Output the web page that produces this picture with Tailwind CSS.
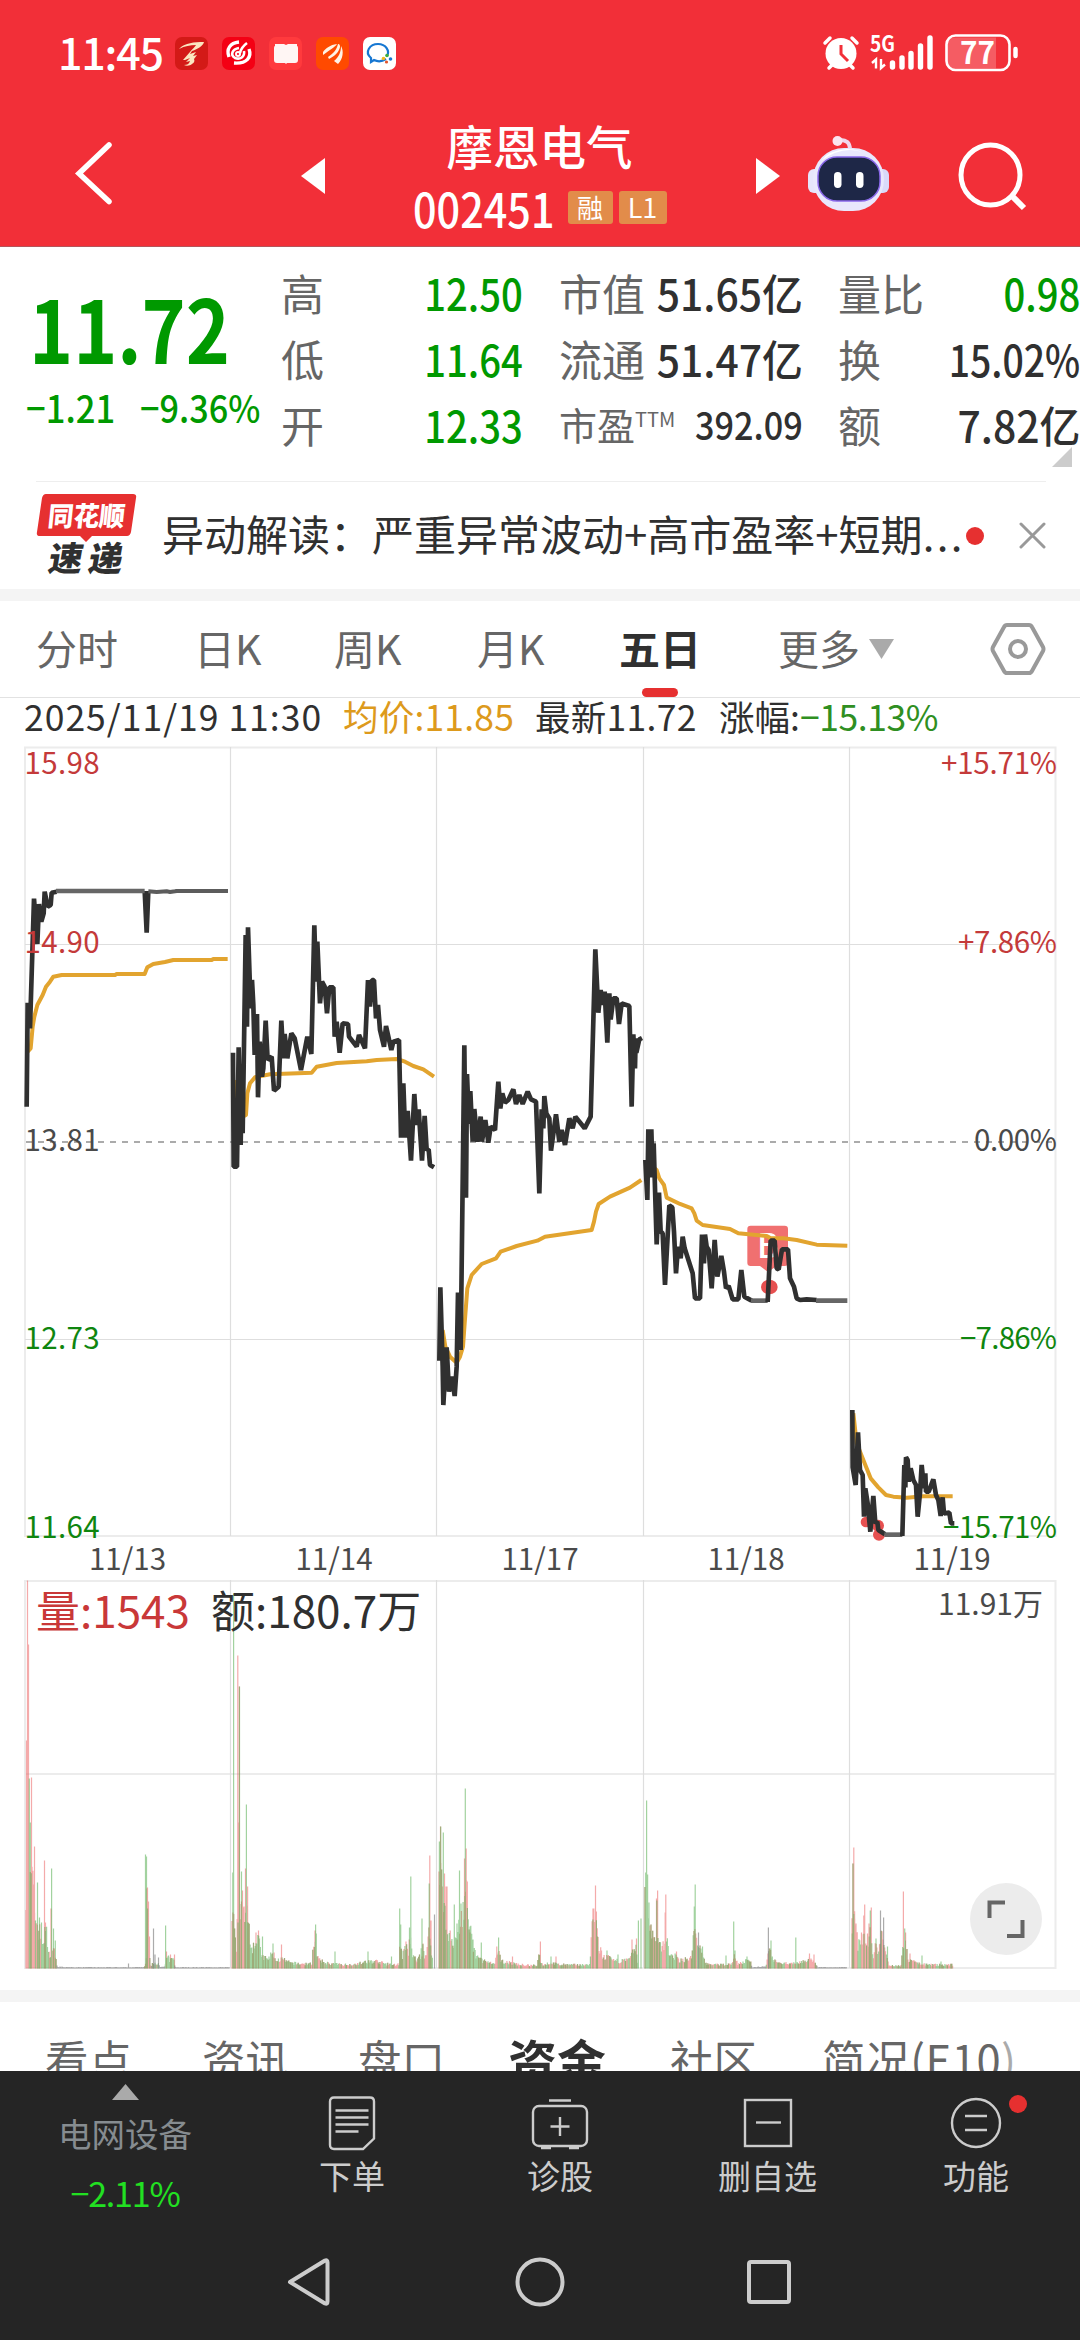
<!DOCTYPE html>
<html lang="zh-CN">
<head>
    <meta charset="UTF-8">
    <meta name="viewport" content="width=device-width, initial-scale=1.0">
    <title>摩恩电气 002451</title>
    <script src="https://cdn.jsdelivr.net/npm/@tailwindcss/browser@4"></script>
</head>
<body class="bg-white">
<div class="w-[1080px] h-[2340px] overflow-hidden flex flex-col font-['Noto_Sans_CJK_SC','Noto_Sans',sans-serif] leading-none text-[#303030] whitespace-nowrap">

    <!-- Header -->
    <header class="h-[247px] shrink-0 bg-[#f22f38] border-b border-[#b5545a] text-white flex flex-col">
        <div class="h-[106px] shrink-0 flex items-center pl-[58px] pr-[60px]">
            <span class="w-[117px] text-[43px] font-medium tracking-[-1.2px] -mt-1">11:45</span>
            <div class="flex gap-[14px]">
                <svg class="w-[33px] h-[33px]" viewBox="0 0 33 33"><rect width="33" height="33" rx="7" fill="#d31a17"/><path d="M5 11c5-5 14-6 24-6-1 4-6 7-12 9l-2 3 6-2-3 4 4-1-3 4c1 2 0 4-2 5-2 2-6 2-8 1 3 0 5-1 6-4l-4 1 4-4-5 2-2 0 7-8c2-3 5-5 6-7-6 0-11 1-17 4z" fill="#fbe6bf"/></svg>
                <svg class="w-[33px] h-[33px]" viewBox="0 0 33 33" fill="none" stroke="#fff"><rect width="33" height="33" rx="7" fill="#f40014" stroke="none"/><path d="M17 5C8 6 4 12 7 20M27 12c3 8-2 15-15 14" stroke-width="3.4"/><path d="M17 11c-7 1-9 7-4 10 5 2 10-1 9-7M25 6c-4 3-6 5-7 10" stroke-width="2.6"/><circle cx="16" cy="17" r="2" stroke-width="2"/></svg>
                <svg class="w-[33px] h-[33px]" viewBox="0 0 33 33"><rect width="33" height="33" rx="7" fill="#ff3a3d"/><path d="M6 7h9l2 1 2-1h9v2q1 0 1 2v12q0 3-3 3h-8l-1 1-1-1H8q-3 0-3-3V11q0-2 1-2z" fill="#fff6f4"/></svg>
                <svg class="w-[33px] h-[33px]" viewBox="0 0 33 33"><rect width="33" height="33" rx="7" fill="#ff4a00"/><path d="M7 15c3-4 7-7 14-8-2 3-7 6-14 11zM12 20c6-4 9-8 10-13 2 0 2 2 2 3-1 5-5 9-11 12zM18 24c5-4 7-9 7-15 3 5 2 13-3 18z" fill="#fff3e4"/></svg>
                <svg class="w-[33px] h-[33px]" viewBox="0 0 33 33"><rect width="33" height="33" rx="7" fill="#fff"/><path d="M23 22c-3 2-8 3-12 1l-3 2v-4C1 15 7 7 15 7c8 0 12 7 9 12" fill="none" stroke="#1677d2" stroke-width="2.2"/><circle cx="24" cy="18.500" r="1.800" fill="#3cae3c"/><circle cx="27.500" cy="22" r="1.800" fill="#1677d2"/><circle cx="23.500" cy="25" r="1.600" fill="#e2542b"/><circle cx="20.500" cy="21.500" r="1.800" fill="#f0b820"/></svg>
            </div>
            <svg class="w-[200px] h-[40px] ml-auto overflow-visible" viewBox="820 34 200 40" fill="none" stroke="#fff">
                <circle cx="841" cy="54.500" r="15.500" fill="#fff" stroke="none"/>
                <path d="M825 44l5-5M857 44l-5-5M829 69l4-4M853 69l-4-4" stroke-width="3.500" stroke-linecap="round"/>
                <path d="M841 46v9l7 7" stroke="#f22f38" stroke-width="3"/>
                <text x="870" y="53" fill="#fff" stroke="none" font-size="22" font-weight="700" textLength="25" lengthAdjust="spacingAndGlyphs">5G</text>
                <path d="M872 64l4-3.500v9M881 60v9l4-3.500" stroke-width="2.400"/>
                <path d="M892.500 64v4M902 59v9M911 54.500v13.500M920.500 47v21M930 39v29" stroke-width="5.400" stroke-linecap="round"/>
                <path d="M954 38.500h42v31h-42q-7 0-7-7v-17q0-7 7-7z" fill="#f55c63" stroke="none"/>
                <rect x="946.500" y="36.500" width="63" height="34.500" rx="9" stroke-width="2.600"/>
                <path d="M1015.500 50v7" stroke-width="4.500" stroke-linecap="round"/>
                <text x="960" y="65" fill="#fff" stroke="none" font-size="31" font-weight="700" textLength="35" lengthAdjust="spacingAndGlyphs">77</text>
            </svg>
        </div>

        <div class="flex-1 flex">
            <svg class="w-[40px] h-[68px] ml-[73px] mt-[33px]" viewBox="73 139 40 68"><path d="M109 145L79 173.500L109 201.500" fill="none" stroke="#fff" stroke-width="5.500" stroke-linecap="round"/></svg>
            <svg class="w-[24px] h-[36px] ml-[188px] mt-[52px]" viewBox="0 0 24 36"><path d="M24 0v36L0 18z" fill="#fff"/></svg>
            <div class="w-[429px] mr-[2px] flex flex-col items-center">
                <div class="text-[46.5px] font-medium mt-[16px]">摩恩电气</div>
                <div class="flex items-center mt-[14px] h-[46px]">
                    <span class="w-[138px] mr-[17px] mt-[4px]"><span class="inline-block origin-left scale-x-[.88] text-[47px] font-medium">002451</span></span>
                    <span class="w-[45px] h-[33px] rounded-[3px] bg-[#e28c4a] flex justify-center items-center text-[26px] pb-[2px] mt-[4px]">融</span>
                    <span class="w-[48px] h-[33px] rounded-[3px] bg-[#e28c4a] flex justify-center items-center text-[27px] pb-[3px] ml-[6px] mt-[4px]">L1</span>
                </div>
            </div>
            <svg class="w-[24px] h-[36px] mt-[52px]" viewBox="0 0 24 36"><path d="M0 0v36L24 18z" fill="#fff"/></svg>
            <svg class="w-[84px] h-[80px] ml-[26px] mt-[28px]" viewBox="805 133 84 80">
                <path d="M838 139q11-1 11 10" fill="none" stroke="#f0d6ec" stroke-width="4"/>
                <circle cx="836.500" cy="140" r="5" fill="#fbe4ef"/>
                <rect x="807" y="168" width="14" height="24" rx="6" fill="#e6e4fb"/>
                <rect x="874" y="168" width="14" height="24" rx="6" fill="#d9d9fa"/>
                <rect x="812" y="147" width="71" height="63" rx="31" fill="#e9e7fc"/>
                <path d="M820 160q26-20 52-4-14-8-26-8-18 1-26 12z" fill="#fff"/>
                <rect x="817" y="156" width="62" height="44" rx="19" fill="#1e2747" stroke="#8a68ea" stroke-width="1.500"/>
                <rect x="833" y="171" width="7.500" height="16" rx="3.700" fill="#fff"/>
                <rect x="855" y="171" width="7.500" height="16" rx="3.700" fill="#fff"/>
            </svg>
            <svg class="w-[72px] h-[72px] ml-[66px] mt-[34px]" viewBox="955 139 72 72" fill="none" stroke="#fff"><ellipse cx="989.500" cy="174" rx="29.500" ry="30" stroke-width="5"/><path d="M1011 195l12 12" stroke-width="6"/></svg>
        </div>
    </header>

    <!-- Quote -->
    <section class="h-[234px] shrink-0 flex relative">
        <div class="w-[281px] shrink-0 text-[#009900] font-medium">
            <div class="pl-[29px] mt-[36px]"><span class="inline-block origin-left scale-x-[.86] text-[87px] font-bold">11.72</span></div>
            <div class="flex text-[38px] mt-[18px] pl-[26px]">
                <span class="w-[114px]"><span class="inline-block origin-left scale-x-[.91]">−1.21</span></span><span class="inline-block origin-left scale-x-[.9]">−9.36%</span>
            </div>
        </div>
        <div class="w-[242px] shrink-0 mt-[12px] flex flex-col text-[43px]">
            <div class="h-[66px] flex items-center justify-between"><span class="text-[#666]">高</span><span class="text-[#009900] font-medium origin-right scale-x-[.89]">12.50</span></div>
            <div class="h-[66px] flex items-center justify-between"><span class="text-[#666]">低</span><span class="text-[#009900] font-medium origin-right scale-x-[.89]">11.64</span></div>
            <div class="h-[66px] flex items-center justify-between"><span class="text-[#666]">开</span><span class="text-[#009900] font-medium origin-right scale-x-[.89]">12.33</span></div>
        </div>
        <div class="w-[244px] shrink-0 ml-[36px] mt-[12px] flex flex-col text-[43px]">
            <div class="h-[66px] flex items-center justify-between"><span class="text-[#666]">市值</span><span class="font-medium origin-right scale-x-[.95]">51.65亿</span></div>
            <div class="h-[66px] flex items-center justify-between"><span class="text-[#666]">流通</span><span class="font-medium origin-right scale-x-[.95]">51.47亿</span></div>
            <div class="h-[66px] flex items-center justify-between text-[38px]"><span class="text-[#666] flex">市盈<span class="text-[20px] mt-[4px]">TTM</span></span><span class="font-medium origin-right scale-x-[.9]">392.09</span></div>
        </div>
        <div class="w-[242px] shrink-0 ml-[35px] mt-[12px] flex flex-col text-[43px]">
            <div class="h-[66px] flex items-center justify-between"><span class="text-[#666]">量比</span><span class="text-[#009900] font-medium origin-right scale-x-[.89]">0.98</span></div>
            <div class="h-[66px] flex items-center justify-between"><span class="text-[#666]">换</span><span class="font-medium origin-right scale-x-[.87]">15.02%</span></div>
            <div class="h-[66px] flex items-center justify-between"><span class="text-[#666]">额</span><span class="font-medium origin-right scale-x-[.95]">7.82亿</span></div>
        </div>
        <svg class="absolute left-[1052px] top-[200px] w-[20px] h-[20px]" viewBox="0 0 20 20"><path d="M20 0v20H0z" fill="#ccc"/></svg>
    </section>

    <!-- News -->
    <section class="h-[108px] shrink-0 flex items-center">
        <div class="w-full h-full border-t border-[#eee] mx-[36px] flex items-center">
            <svg class="w-[102px] h-[84px] shrink-0 overflow-visible -mt-[4px]" viewBox="36 492 102 84">
                <path d="M46 494h87q4 0 3 4l-5 34q-1 4-4 4H92l-6 6-6-6H40q-4 0-3-4l5-34q1-4 4-4z" fill="#e63030"/>
                <text transform="translate(47 526) skewX(-6)" font-size="27" font-weight="900" fill="#fff" textLength="77" lengthAdjust="spacingAndGlyphs">同花顺</text>
                <text transform="translate(47 571) skewX(-10)" font-size="34" font-weight="900" fill="#303030" textLength="74">速递</text>
            </svg>
            <div class="ml-[24px] w-[801px] text-[42px] -mt-[5px]">异动解读：严重异常波动+高市盈率+短期<span class="tracking-[2.4px]">...</span></div>
            <span class="w-[18px] h-[18px] rounded-full bg-[#e63030] shrink-0 ml-[3px]"></span>
            <svg class="w-[27px] h-[27px] ml-[35px] shrink-0" viewBox="0 0 27 27"><path d="M2 2l23 23M25 2L2 25" stroke="#999" stroke-width="3" stroke-linecap="round"/></svg>
        </div>
    </section>

    <div class="h-[12px] shrink-0 bg-[#f4f4f4]"></div>

    <!-- Period tabs -->
    <nav class="h-[97px] shrink-0 border-b border-[#e2e2e2] flex items-center text-[41px] text-[#666] pl-[36px] relative">
        <span class="w-[158px] -mt-[4px]">分时</span>
        <span class="w-[140px] -mt-[4px]">日K</span>
        <span class="w-[143px] -mt-[4px]">周K</span>
        <span class="w-[142px] -mt-[4px]">月K</span>
        <span class="w-[159px] -mt-[4px] font-bold text-[#303030]">五日</span>
        <span class="w-[91px] -mt-[4px]">更多</span>
        <svg class="w-[25px] h-[20px]" viewBox="0 0 25 20"><path d="M0 0h25L12.500 20z" fill="#aaa"/></svg>
        <svg class="w-[56px] h-[54px] ml-[96px]" viewBox="0 0 56 54" fill="none" stroke="#999" stroke-width="4"><path d="M17 3h22q2 0 3 2l11 20q1 2 0 4L42 49q-1 2-3 2H17q-2 0-3-2L3 29q-1-2 0-4L14 5q1-2 3-2z"/><circle cx="28" cy="27" r="8"/></svg>
        <span class="absolute left-[642px] top-[87px] w-[36px] h-[9px] rounded-full bg-[#e63030]"></span>
    </nav>

    <!-- Quote line -->
    <div class="h-[42px] shrink-0 flex items-center text-[35.5px] pl-[24px]">
        <span class="w-[319px] tracking-[1px] -mt-[7px]">2025/11/19 11:30</span>
        <span class="w-[192px] text-[#dd9a1c] tracking-[0.2px] -mt-[7px]">均价:11.85</span>
        <span class="w-[184px] tracking-[0.3px] -mt-[7px]">最新11.72</span>
        <span class="-mt-[7px]">涨幅:<span class="text-[#2f8f22] tracking-[-0.4px]">−15.13%</span></span>
    </div>

    <!-- Price chart -->
    <svg class="w-[1080px] h-[840px] shrink-0" viewBox="0 740 1080 840" fill="none">
        <g stroke="#ececec" stroke-width="2"><path d="M25 747.500H1055.500V1536H25z"/></g>
        <g stroke="#dedede" stroke-width="1.200"><path d="M25 944.500H1055M25 1339.500H1055M230.500 747V1536M436.500 747V1536M643.500 747V1536M849.500 747V1536"/></g>
        <path d="M26 1142H1055" stroke="#909090" stroke-width="1.700" stroke-dasharray="6 6"/>

        <g transform="translate(640 1080) scale(.33333)">
            <path d="M332 437h102q10 0 10 10v101q0 10-10 10h-24l-26 18-24-18h-28q-10 0-10-10V447q0-10 10-10z" fill="#f07070"/>
            <text x="384" y="535" text-anchor="middle" font-size="100" font-weight="500" fill="#fff">B</text>
            <ellipse cx="388" cy="621" rx="25" ry="22" fill="#e65050"/>
            <circle cx="678" cy="1326" r="16" fill="#e65050"/>
            <circle cx="714" cy="1337" r="18" fill="#e65050"/>
            <circle cx="717" cy="1364" r="18" fill="#e65050"/>
        </g>

        <!-- average price -->
        <g stroke="#e2a42f" stroke-width="12" stroke-linejoin="round">
            <g transform="translate(0 740) scale(.33333)">
                <polyline points="83,935 92,925 98,860 103,830 112,795 128,765 138,740 150,725 160,710 185,705 345,705 350,702 434,702 442,682 460,672 495,666 520,660 635,660 640,657 683,657"/>
                <polyline points="706,1020 712,1100 728,1130 738,1125 742,1060 750,1030 765,1012 810,1003 935,998 950,980 1010,969 1100,964 1130,960 1190,957 1215,965 1240,978 1270,988 1302,1010"/>
            </g>
            <g transform="translate(430 900) scale(.33333)">
                <polyline points="38,1290 46,1340 60,1370 80,1388 90,1370 99,1340 104,1270 112,1165 125,1125 155,1092 198,1075 212,1055 260,1038 322,1022 345,1010 485,990 492,965 498,935 506,912 540,890 600,863 634,840"/>
                <polyline points="646,785 668,800 680,810 688,835 702,855 710,893 750,912 785,925 793,940 800,962 818,975 900,987 925,1000 1010,1008 1022,1015 1060,1015 1100,1020 1160,1034 1252,1037"/>
            </g>
            <polyline transform="translate(640 1080) scale(.33333)" points="640,1000 650,1090 662,1120 676,1155 692,1195 715,1222 738,1245 760,1250 800,1253 850,1249 938,1249"/>
        </g>

        <!-- price -->
        <g stroke="#303030" stroke-width="14" stroke-linejoin="bevel">
            <g transform="translate(0 740) scale(.33333)">
                <polyline points="80,1100 83,788 90,865 102,476 112,612 117,492 124,545 131,520 134,455 143,500 152,495 155,458 170,455"/>
                <polyline points="434,453 440,578 445,453"/>
                <polyline points="168,453 434,453" stroke="#666"/>
                <polyline points="445,454 470,456 500,454 510,456 525,454 530,453 684,453" stroke="#5c5c5c" stroke-width="12"/>
                <polyline points="699,938 701,1280 711,1280 716,922 722,1215 726,992 728,1180 737,585 741,860 744,562 752,805 756,720 760,795 764,945 771,822 774,1072 779,905 786,1010 790,985 797,842 803,960 815,950 822,1052 836,1040 844,842 850,955 854,882 862,955 874,880 884,895 903,990 922,890 934,942 943,556 948,725 952,605 960,790 966,725 974,740 981,820 988,742 1000,742 1004,890 1010,845 1019,938 1028,850 1044,852 1047,890 1070,920 1077,885 1095,925 1104,720 1110,800 1116,720 1122,720 1128,835 1134,795 1140,870 1152,920 1158,858 1174,930 1180,905 1197,900 1203,1193 1210,1030 1216,1193 1223,1113 1233,1262 1243,1062 1249,1155 1256,1108 1266,1262 1274,1128 1280,1230 1286,1228 1290,1275 1302,1282"/>
            </g>
            <g transform="translate(430 900) scale(.33333)">
                <polyline points="28,1382 31,1162 38,1400 40,1515 50,1342 57,1475 66,1430 74,1488 80,1400 84,1178 92,1350 103,436 108,893 111,522 117,672 121,573 128,725 133,627 142,725 152,650 156,725 166,660 175,728 182,680 195,690 205,545 211,625 217,580 225,608 235,600 250,568 258,612 268,585 278,612 293,575 303,598 318,605 328,880 335,628 340,685 343,588 349,640 358,655 363,752 378,643 388,725 395,690 405,735 418,655 428,685 436,650 464,685 482,650 496,148 505,338 512,270 518,315 524,275 532,428 538,280 542,358 550,295 560,295 567,372 575,310 598,318 605,620 610,403 615,505 617,415 619,458 628,418 636,414"/>
                <polyline points="646,780 652,900 655,688 660,832 664,688 668,832 671,730 680,1033 687,878 692,995 698,1000 705,1155 718,916 727,922 732,995 738,1120 744,1040 752,1075 758,1010 764,1045 788,1120 795,1195 810,1195 816,1004 822,1090 825,1004 830,1040 836,1050 845,1165 854,1020 862,1130 874,1068 882,1115 888,1165 896,1158 908,1198 925,1198 934,1110 943,1190 965,1202"/>
                <polyline points="963,1202 1013,1202" stroke="#666"/>
                <polyline points="1013,1206 1022,1022 1034,1022 1040,1105 1046,1108 1056,1048 1074,1048 1080,1135 1092,1160 1100,1195 1110,1200 1130,1198 1160,1200"/>
                <polyline points="1158,1202 1252,1202" stroke="#666"/>
            </g>
            <g transform="translate(640 1080) scale(.33333)">
                <polyline points="637,990 638,1162 647,1215 654,1057 660,1170 668,1185 672,1310 676,1225 683,1270 691,1355 700,1248 706,1330 712,1325 715,1350 735,1363"/>
                <polyline points="733,1364 787,1364" stroke="#666"/>
                <polyline points="787,1368 793,1155 796,1222 798,1132 803,1140 806,1205 812,1165 820,1200 828,1215 833,1310 840,1240 845,1155 852,1225 856,1180 858,1235 866,1235 880,1198 888,1245 895,1260 902,1308 908,1252 912,1300 928,1298 933,1330 943,1330"/>
            </g>
        </g>

        <g font-size="29.500">
            <g fill="#c43a3a">
                <text x="24.500" y="774" textLength="75">15.98</text>
                <text x="24.500" y="953" textLength="75">14.90</text>
                <text x="1057" y="774" text-anchor="end" textLength="116">+15.71%</text>
                <text x="1057" y="953" text-anchor="end" textLength="99">+7.86%</text>
            </g>
            <g fill="#4a4a4a">
                <text x="24.500" y="1151" textLength="75">13.81</text>
                <text x="1057" y="1151" text-anchor="end" textLength="83">0.00%</text>
            </g>
            <g fill="#0f860f">
                <text x="24.500" y="1349" textLength="75">12.73</text>
                <text x="24.500" y="1538" textLength="75">11.64</text>
                <text x="1057" y="1349" text-anchor="end" textLength="97">−7.86%</text>
                <text x="1057" y="1538" text-anchor="end" textLength="114">−15.71%</text>
            </g>
            <g fill="#4a4a4a" text-anchor="middle">
                <text x="127.500" y="1570">11/13</text>
                <text x="334" y="1570">11/14</text>
                <text x="540" y="1570">11/17</text>
                <text x="746" y="1570">11/18</text>
                <text x="952" y="1570">11/19</text>
            </g>
        </g>
    </svg>

    <!-- Volume chart -->
    <svg class="w-[1080px] h-[410px] shrink-0" viewBox="0 1580 1080 410" fill="none">
        <g stroke="#ececec" stroke-width="2"><path d="M25 1581H1055.500V1968H25zM25 1774H1055"/></g>
        <g stroke="#dedede" stroke-width="1.200"><path d="M230.500 1580V1968M436.500 1580V1968M643.500 1580V1968M849.500 1580V1968"/></g>
        <path id="volRed" stroke="#ea5555" stroke-opacity=".5" stroke-width="1.200"/>
        <path id="volGreen" stroke="#55ad50" stroke-opacity=".55" stroke-width="1.200"/>
        <path id="volFlat" stroke="#888" stroke-opacity=".7" stroke-width="1.200"/>
        <text x="36" y="1628" font-size="44" fill="#c93838">量:1543</text>
        <text x="211" y="1628" font-size="44" fill="#303030">额:180.7万</text>
        <text x="1043" y="1615" font-size="30" fill="#4a4a4a" text-anchor="end">11.91万</text>
        <circle cx="1006" cy="1919" r="36" fill="#ececec"/>
        <path d="M989.500 1918v-15.500H1005M1022.500 1920v16H1007" stroke="#666" stroke-width="4"/>
    </svg>

    <div class="h-[12px] shrink-0 bg-[#f4f4f4]"></div>

    <!-- Content tabs -->
    <nav class="h-[69px] shrink-0 overflow-hidden flex items-start pt-[35px] pl-[45px] text-[43.5px] text-[#666]">
        <span class="w-[157px]">看点</span>
        <span class="w-[156px]">资讯</span>
        <span class="w-[150px]">盘口</span>
        <span class="w-[162px] text-[49px] font-bold text-[#303030] -mt-[2px]">资金</span>
        <span class="w-[152px]">社区</span>
        <span class="tracking-[0.6px]">简况(E10<span class="text-[#aaa]">)</span></span>
    </nav>

    <!-- Bottom bar -->
    <footer class="h-[269px] shrink-0 bg-[#252525] text-[#ccc] text-[33px]">
        <div class="h-[150px] flex">
            <div class="w-[250px] flex flex-col items-center pt-[13px]">
                <svg class="w-[27px] h-[16px]" viewBox="0 0 27 16"><path d="M13.500 0L27 16H0z" fill="#aaa"/></svg>
                <span class="text-[#868c90] mt-[16px] text-[33.5px]">电网设备</span>
                <span class="text-[#22e022] text-[34px] tracking-[-1.2px] mt-[26px]">−2.11%</span>
            </div>
            <div class="w-[204px] flex flex-col items-center pt-[24px]">
                <svg class="w-[50px] h-[56px]" viewBox="0 0 50 56" fill="none" stroke="#ccc" stroke-width="2.400"><path d="M7 2.500h36q4 0 4 4v37L36 54H7q-4 0-4-4V6.500q0-4 4-4z"/><path d="M8.500 15.500h33M8.500 22.500h33M8.500 29.500h33M8.500 36.500h23"/></svg>
                <span class="mt-[8px]">下单</span>
            </div>
            <div class="w-[212px] flex flex-col items-center pt-[24px]">
                <svg class="w-[60px] h-[56px]" viewBox="0 0 60 56" fill="none" stroke="#ccc" stroke-width="2.400"><rect x="3" y="11" width="54" height="40" rx="6"/><path d="M19 5.500h22M30 22v19M20.500 31.500h19M11 53h10M39 53h10" /></svg>
                <span class="mt-[8px]">诊股</span>
            </div>
            <div class="w-[203px] flex flex-col items-center pt-[24px]">
                <svg class="w-[50px] h-[56px]" viewBox="0 0 50 56" fill="none" stroke="#ccc" stroke-width="2.400"><rect x="2" y="5" width="46" height="46"/><path d="M13 27.500h25"/></svg>
                <span class="mt-[8px]">删自选</span>
            </div>
            <div class="w-[211px] flex flex-col items-center pt-[24px] relative">
                <svg class="w-[54px] h-[56px] ml-[3px]" viewBox="0 0 54 56" fill="none" stroke="#ccc" stroke-width="2.400"><circle cx="27" cy="28" r="24"/><path d="M16 21h22M16 35h22"/></svg>
                <span class="mt-[8px] ml-[3px]">功能</span>
                <span class="absolute left-[140px] top-[24px] w-[18px] h-[18px] rounded-full bg-[#e63030]"></span>
            </div>
        </div>
        <svg class="w-[1080px] h-[119px]" viewBox="0 2221 1080 119" fill="none" stroke="#ccc" stroke-width="4" stroke-linejoin="round">
            <path d="M290 2282L325 2260.500q2.500-1 2.500 2v39q0 3-2.500 2z"/>
            <circle cx="540" cy="2282" r="22.500"/>
            <rect x="749" y="2262" width="40" height="40" rx="2"/>
        </svg>
    </footer>
</div>

<script>
// envelope: "x:height" of the ordinary bars, spikes: "x:height" + r/g/n
const days = [
    {
        env: '26:90 32:90 35:60 37:45 43:28 46:40 49:14 52:18 56:16 57:2 58:1 144:1 149:20 151:1 153:6 158:6 160:1 165:2 166:10 174:9 175:1 229:1',
        spikes: '26.5:228r 27.5:388r 28.5:324r 29.3:190g 30.3:146g 31.5:191r 32.5:90r 34:84r 34.5:122r 37.5:86g 39.5:51g 41.5:46g 44.5:108r 45.5:46r 51:60r 51.6:100g 53.5:40g 55.3:28g 60:2n 62:2n 128.5:5n 145.5:114g 146.5:112g 146.9:80r 147.5:81r 148.5:67r 147.5:60g 149.5:32r 153.5:40n 155:14n 158.5:11n 165.6:43g 166.5:17r 168.5:13g 170.5:14r 174.5:14r'
    },
    {
        env: '232:50 234:45 236:18 238:60 241:75 243:62 245:40 247:70 249:45 252:22 256:30 258:32 262:12 268:10 273:16 277:8 281:10 290:6 300:5 312:5 314:35 317:12 320:8 330:5 350:4 368:7 375:8 385:5 396:4 399:5 400:30 402:12 406:22 408:15 410:35 412:14 417:8 423:20 425:12 429:35 431:25 432:15 433:1',
        spikes: '232.8:96g 233.6:375g 237.8:313r 238.6:146r 239.4:282r 239.5:282g 241.5:97g 242.5:78r 245.5:100r 246.4:164g 247.6:82r 256:36r 258.5:38r 262.5:32g 273:25g 281.5:24r 315:38r 315.6:44g 316.3:35g 335:17g 368:17g 391.5:12g 399.7:60g 400.7:44g 406:27r 410.8:92g 409.5:41g 422:50g 423:25r 429.8:113r 429.2:85g 431:48r 434.5:54n'
    },
    {
        env: '439:100 441:98 445:60 448:42 452:25 456:28 460:50 463:60 466:80 469:45 473:22 477:12 484:8 495:4 497:18 499:15 501:8 520:4 537:3 539:14 541:7 543:4 551:6 560:4 590:4 591:35 596:50 599:22 603:12 608:12 612:8 620:8 630:9 633:18 637:20 638:2',
        spikes: '439.4:127g 440.5:142r 440.7:142g 443.3:136g 444.5:95r 446:82r 447:82r 454.3:64g 457:45g 459.5:98g 461:65g 464.5:110r 465.3:180g 466.2:120r 467.3:87r 470:42g 473:29g 481.3:26g 496.8:22r 498.6:31g 512.5:12r 540.4:27r 551:12g 556:12r 593:60r 593.8:60r 595.5:83r 596.4:57r 597.5:32g 607:18g 618:14g 632:29r 636.5:30r 638.4:48g 641:50g'
    },
    {
        env: '645:80 648:60 651:38 655:27 659:35 661:20 664:28 667:28 669:14 676:12 680:8 692:12 694:40 697:30 699:22 702:14 706:5 720:4 732:5 735:14 738:5 747:8 751:6 752:1 766:2 769:20 771:16 774:8 780:5 796:6 802:7 810:10 815:5 818:1 847:1',
        spikes: '645.7:96g 646.6:168g 647.6:94g 649:66g 650:43r 656.5:70r 656.8:68g 657.6:78r 665.2:56r 665.8:74r 676.5:17r 694.3:62g 695.2:84g 698.5:36n 702.5:22g 726:13g 733.7:47g 735:18g 747:12g 768.4:41n 769.5:20r 771:28g 795.8:31g 809.5:15r 814:14r'
    },
    {
        env: '852:60 854:60 856:40 858:25 861:30 864:30 866:20 870:42 873:14 876:25 878:15 881:35 884:25 886:18 889:3 901:3 903:30 906:22 908:10 916:6 928:4 953:4',
        spikes: '852.3:35g 852.9:105r 853:105g 853.8:121r 854.7:50r 856:45r 863.8:53r 864.7:64r 870.3:58g 871.3:61r 869:45r 876:30g 880.5:58n 883.6:51n 887.5:22g 903.4:77r 904.7:40g 905.6:36r 910:15r 922:13g 941:7g'
    }
];

let seed = 7;
function rand() {
    seed = (seed * 16807) % 2147483647;
    return seed / 2147483647;
}

function drawVolume() {
    const base = 1968.6;
    const paths = { r: '', g: '', n: '' };
    days.forEach(day => {
        const pts = day.env.split(' ').map(p => p.split(':').map(Number));
        let i = 0;
        let kind = 'r';
        for (let x = pts[0][0]; x < pts[pts.length - 1][0]; x += 0.86) {
            while (i < pts.length - 2 && pts[i + 1][0] <= x) i++;
            const [x0, h0] = pts[i], [x1, h1] = pts[i + 1];
            const mid = h0 + (h1 - h0) * (x - x0) / (x1 - x0);
            const h = mid < 3 ? mid + rand() * 0.6 : mid * (0.65 + rand() * 0.6);
            if (mid < 3) {
                paths.n += `M${x.toFixed(1)} ${base}v${(-h).toFixed(1)}`;
                continue;
            }
            // same-coloured minutes come in short runs
            if (rand() < 0.3) kind = kind === 'r' ? 'g' : 'r';
            paths[kind] += `M${x.toFixed(1)} ${base}v${(-h).toFixed(1)}`;
            if (rand() < 0.25) paths[kind === 'r' ? 'g' : 'r'] += `M${x.toFixed(1)} ${base}v${(-h).toFixed(1)}`;
        }
        day.spikes.split(' ').forEach(s => {
            const [x, rest] = s.split(':');
            paths[rest.slice(-1)] += `M${x} ${base}v-${parseFloat(rest)}`;
        });
    });
    document.getElementById('volRed').setAttribute('d', paths.r);
    document.getElementById('volGreen').setAttribute('d', paths.g);
    document.getElementById('volFlat').setAttribute('d', paths.n);
}
drawVolume();
</script>
</body>
</html>
